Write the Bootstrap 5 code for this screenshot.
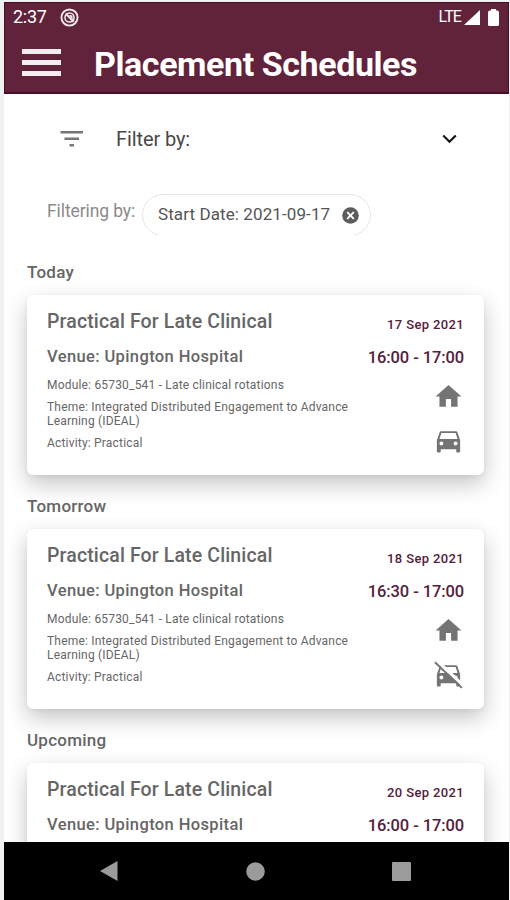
<!DOCTYPE html>
<html lang="en">
<head>
<meta charset="utf-8">
<meta name="viewport" content="width=device-width, initial-scale=1">
<title>Placement Schedules</title>
<link href="https://cdn.jsdelivr.net/npm/bootstrap@5.3.0/dist/css/bootstrap.min.css" rel="stylesheet">
<style>
  body { font-family: Roboto, "Liberation Sans", sans-serif; background: #f1f1f2; color: #666; }
  svg { display: block; flex: none; }
  .phone { width: 505px; height: 898px; margin: 2px 0 0 4px; background: #fff; }
  .top-area { height: 92px; background: #61233b; border: 1px solid #4b0d24; border-bottom-width: 2px; }
  .status { height: 28px; padding: 0 9px 0 8px; font-size: 18px; line-height: 28px; }
  .clock { letter-spacing: -.3px; width: 47px; }
  .lte { font-size: 16px; letter-spacing: -.9px; margin-right: 3px; }
  .title-row { padding: 1px 0 0 17px; gap: 33px; }
  .title-row svg { margin-bottom: 3px; }
  .title-row h1 { font-size: 34px; line-height: 64px; font-weight: 700; letter-spacing: -.42px; }
  .filter-row { height: 90px; padding: 0 52px 0 56px; }
  .filter-label { font-size: 20px; color: #484848; margin-left: 32px; letter-spacing: -.1px; }
  .chips { height: 56px; padding: 10px 0 0 43px; }
  .chips-label { font-size: 17.5px; line-height: 34px; color: #8a8a8a; width: 95px; letter-spacing: -.1px; }
  .chip-clip { height: 41px; overflow: hidden; }
  .chip { width: 229px; height: 42px; border: 1px solid #e6e6e6; border-radius: 21px; padding: 0 11px 0 15px; color: #555; font-size: 17px; letter-spacing: .1px; }
  .section-title { font-size: 17px; line-height: 24px; font-weight: 500; letter-spacing: .25px; height: 54px; padding-top: 19px; color: #666; }
  .day-list { padding: 1px 25px 0 23px; }
  .visit { height: 180px; border: 0; border-radius: 6px; padding: 0 20px; color: #666; box-shadow: 0 9px 22px rgba(0,0,0,.23), 0 1px 4px rgba(0,0,0,.05); }
  .visit h2 { font-size: 19.5px; line-height: 24px; font-weight: 500; margin: 15px 0 0; letter-spacing: .13px; white-space: nowrap; }
  .visit h3 { font-size: 16.5px; line-height: 22px; font-weight: 500; margin: 12px 0 10px; letter-spacing: .38px; }
  .visit p { font-size: 12px; line-height: 14px; margin: 0 0 8px; width: 320px; letter-spacing: .19px; }
  .when { width: 92px; margin-left: -8px; color: #54203a; font-weight: 500; }
  .when .day { font-size: 13px; line-height: 18px; margin-top: 21px; letter-spacing: .36px; white-space: nowrap; }
  .when .hours { font-size: 16.5px; line-height: 22px; margin-top: 13px; letter-spacing: -.1px; white-space: nowrap; }
  .when svg { fill: #747474; }
  .icon-home { margin-top: 12px; }
  .icon-car { margin-top: 14px; }
  .soft-keys { height: 58px; background: #000; gap: 127px; padding-right: 3px; }
</style>
</head>
<body class="overflow-hidden">
<svg width="0" height="0" class="position-absolute">
  <symbol id="home" viewBox="0 0 24 24"><path d="M10 20v-6h4v6h5v-8h3L12 3 2 12h3v8z"/></symbol>
  <symbol id="car" viewBox="0 0 24 24"><path d="M18.92 5.01C18.72 4.42 18.16 4 17.5 4h-11c-.66 0-1.21.42-1.42 1.01L3 11v8.500c0 .55.450 1 1 1h1c.55 0 1-.45 1-1V18h12v1.500c0 .55.450 1 1 1h1c.55 0 1-.45 1-1V11l-2.080-5.990zM6.500 15c-.83 0-1.500-.67-1.500-1.500S5.670 12 6.500 12s1.500.670 1.500 1.500S7.330 15 6.500 15zm11 0c-.83 0-1.500-.67-1.500-1.500s.670-1.500 1.500-1.500 1.500.670 1.500 1.500-.67 1.500-1.500 1.500zM5 10l1.500-4.500h11L19 10z"/></symbol>
</svg>
<div class="phone d-flex flex-column overflow-hidden">
  <header class="top-area text-white flex-shrink-0">
    <div class="status d-flex align-items-center">
      <span class="clock">2:37</span>
      <svg width="19" height="19" viewBox="0 0 20 20" fill="none" stroke="#f3e9ed"><circle cx="10" cy="10" r="8.500" stroke-width="2"/><circle cx="10" cy="10" r="4.800" stroke-width="1.600"/><path d="M6 6l8.500 8.500" stroke-width="2.200"/><path d="M9 7l4 1 .5 4z" fill="#f3e9ed" stroke="none"/></svg>
      <span class="lte ms-auto">LTE</span>
      <svg width="16" height="15" viewBox="0 0 16 16" preserveAspectRatio="none" fill="#fff"><path d="M16 0v16H0z"/></svg>
      <svg class="ms-2" width="11" height="17" viewBox="0 0 11 17" fill="#fff"><path d="M3 0h5v1.500h1.500Q11 2 11 3.500v12Q11 17 9.500 17h-8Q0 17 0 15.500v-12Q0 2 1.500 1.500H3z"/></svg>
    </div>
    <div class="title-row d-flex align-items-center">
      <svg width="39" height="27" viewBox="0 0 39 27" fill="#f5edf0"><path d="M0 0h39v5H0zM0 11h39v5H0zM0 22h39v5H0z"/></svg>
      <h1 class="m-0">Placement Schedules</h1>
    </div>
  </header>

  <main class="flex-grow-1 overflow-hidden">
    <div class="filter-row d-flex align-items-center">
      <svg width="24" height="16" viewBox="0 0 24 16" fill="#777"><path d="M.5 0h22.500v2.500H.500zM4.500 6.500h14.500V9h-14.500zM9.500 13h4.500v2.500h-4.500z"/></svg>
      <span class="filter-label">Filter by:</span>
      <svg class="ms-auto" width="15" height="10" viewBox="0 0 15 10" fill="none" stroke="#151515" stroke-width="2.200"><path d="M1.200 1.500l6.300 6.300 6.300-6.300"/></svg>
    </div>
    <div class="chips d-flex">
      <span class="chips-label">Filtering by:</span>
      <div class="chip-clip">
        <div class="chip d-flex align-items-center justify-content-between">
          <span>Start Date: 2021-09-17</span>
          <svg width="17" height="17" viewBox="0 0 17 17"><circle cx="8.500" cy="8.500" r="8.300" fill="#5c5c5c"/><path d="M5.200 5.200l6.600 6.600M11.800 5.200l-6.600 6.600" stroke="#fff" stroke-width="1.900"/></svg>
        </div>
      </div>
    </div>
    <div class="day-list">
      <div class="section-title">Today</div>
      <article class="visit card flex-row justify-content-between">
        <div>
          <h2>Practical For Late Clinical</h2>
          <h3>Venue: Upington Hospital</h3>
          <p>Module: 65730_541 - Late clinical rotations</p>
          <p>Theme: Integrated Distributed Engagement to Advance Learning (IDEAL)</p>
          <p>Activity: Practical</p>
        </div>
        <div class="when d-flex flex-column align-items-end">
          <div class="day">17 Sep 2021</div>
          <div class="hours">16:00 - 17:00</div>
          <svg class="icon-home" width="31" height="31"><use href="#home"/></svg>
          <svg class="icon-car" width="31" height="31"><use href="#car"/></svg>
        </div>
      </article>
      <div class="section-title">Tomorrow</div>
      <article class="visit card flex-row justify-content-between">
        <div>
          <h2>Practical For Late Clinical</h2>
          <h3>Venue: Upington Hospital</h3>
          <p>Module: 65730_541 - Late clinical rotations</p>
          <p>Theme: Integrated Distributed Engagement to Advance Learning (IDEAL)</p>
          <p>Activity: Practical</p>
        </div>
        <div class="when d-flex flex-column align-items-end">
          <div class="day">18 Sep 2021</div>
          <div class="hours">16:30 - 17:00</div>
          <svg class="icon-home" width="31" height="31"><use href="#home"/></svg>
          <svg class="icon-car" width="31" height="31" viewBox="0 0 24 24"><use href="#car"/><path d="M3 .4L24 20.300" stroke="#fff" stroke-width="2.400"/><path d="M1.500 1.800L22.300 21.600" stroke="#747474" stroke-width="1.500"/></svg>
        </div>
      </article>
      <div class="section-title">Upcoming</div>
      <article class="visit card flex-row justify-content-between">
        <div>
          <h2>Practical For Late Clinical</h2>
          <h3>Venue: Upington Hospital</h3>
        </div>
        <div class="when d-flex flex-column align-items-end">
          <div class="day">20 Sep 2021</div>
          <div class="hours">16:00 - 17:00</div>
        </div>
      </article>
    </div>
  </main>

  <nav class="soft-keys d-flex align-items-center justify-content-center flex-shrink-0">
    <svg width="20" height="22" viewBox="0 0 20 22" fill="#9b9b9b"><path d="M18.500 1v20L1 11z"/></svg>
    <svg width="19" height="19" viewBox="0 0 19 19" fill="#9b9b9b"><circle cx="9.500" cy="9.500" r="9.300"/></svg>
    <svg width="19" height="19" viewBox="0 0 19 19" fill="#9b9b9b"><rect width="19" height="19" rx="1"/></svg>
  </nav>
</div>
<script src="https://cdn.jsdelivr.net/npm/bootstrap@5.3.0/dist/js/bootstrap.bundle.min.js"></script>
</body>
</html>
